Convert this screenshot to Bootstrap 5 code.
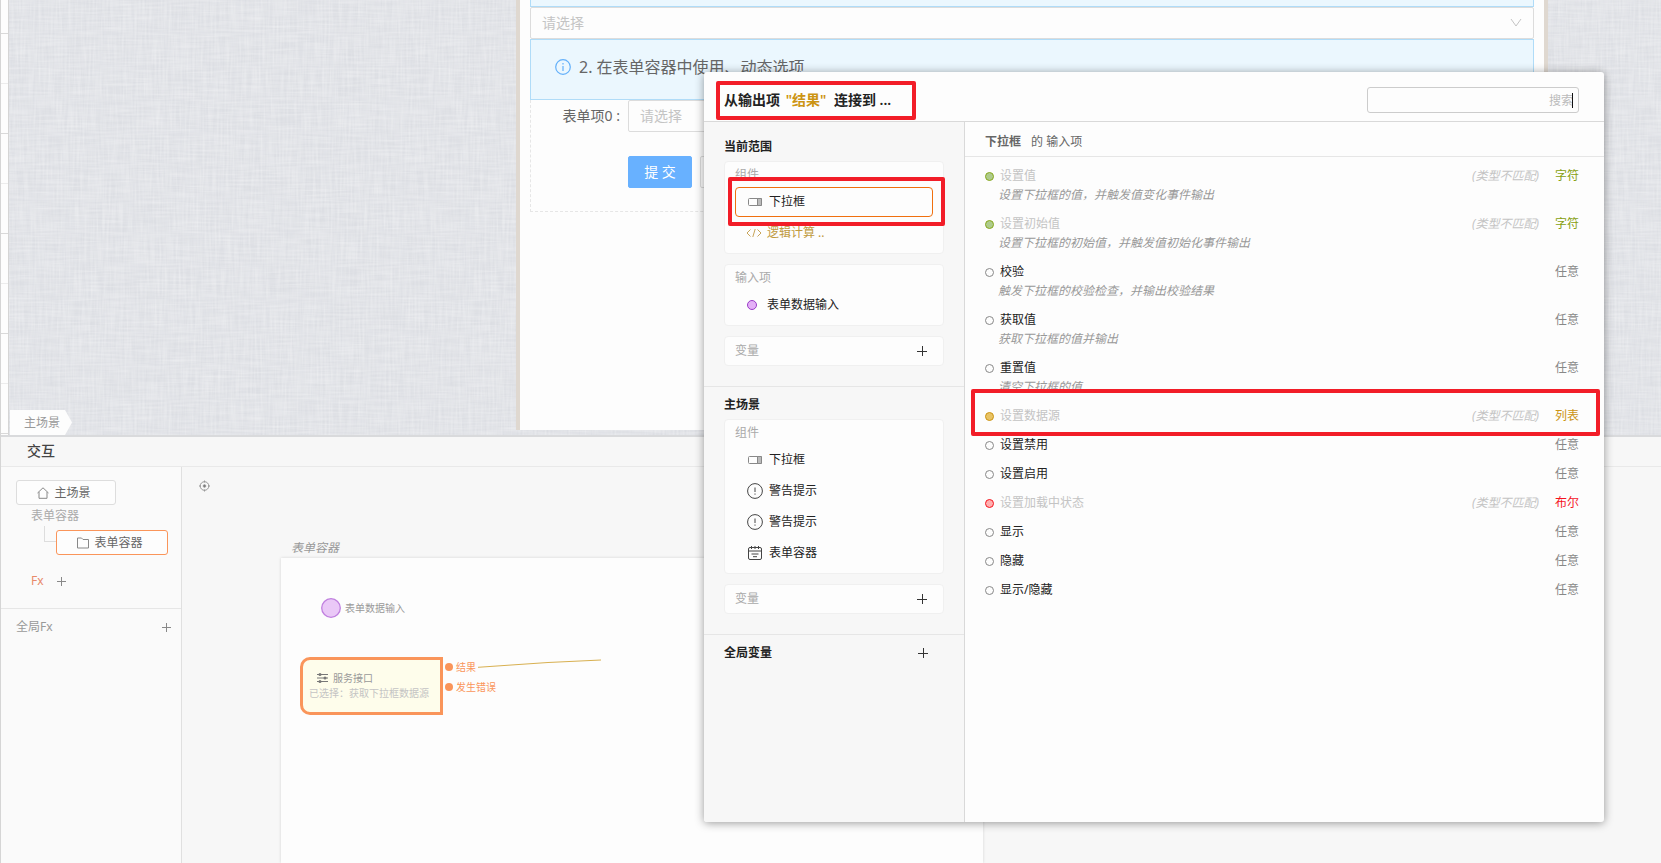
<!DOCTYPE html>
<html lang="zh-CN">
<head>
<meta charset="utf-8">
<meta name="viewport" content="width=device-width, initial-scale=1">
<title>交互</title>
<link href="https://cdn.jsdelivr.net/npm/bootstrap@5.3.0/dist/css/bootstrap.min.css" rel="stylesheet">
<style>
body{font-family:"Noto Sans","Noto Sans CJK SC",sans-serif;font-size:12px;line-height:20px;color:#222;background:#f7f7f7;overflow:hidden}
button,input{font-family:inherit}
.app{min-height:100vh;border-left:1px solid #d5d5d5}
svg{display:block;flex:none}
/* stage, with a linen weave made of horizontal and vertical streaks */
.stage{height:437px;border-bottom:2px solid #d9dadc;background-color:#dcdee3;overflow:hidden;
background-image:
url("data:image/svg+xml,%3Csvg xmlns='http://www.w3.org/2000/svg' width='400' height='400'%3E%3Cfilter id='a' x='0' y='0' width='1' height='1'%3E%3CfeTurbulence type='fractalNoise' baseFrequency='.03 .5' numOctaves='2' stitchTiles='stitch'/%3E%3CfeColorMatrix values='0 0 0 0 1 0 0 0 0 1 0 0 0 0 1 .5 0 0 0 -.15'/%3E%3C/filter%3E%3Crect width='400' height='400' filter='url(%23a)'/%3E%3C/svg%3E"),
url("data:image/svg+xml,%3Csvg xmlns='http://www.w3.org/2000/svg' width='400' height='400'%3E%3Cfilter id='a' x='0' y='0' width='1' height='1'%3E%3CfeTurbulence type='fractalNoise' baseFrequency='.5 .03' numOctaves='2' stitchTiles='stitch'/%3E%3CfeColorMatrix values='0 0 0 0 1 0 0 0 0 1 0 0 0 0 1 .5 0 0 0 -.15'/%3E%3C/filter%3E%3Crect width='400' height='400' filter='url(%23a)'/%3E%3C/svg%3E")}
.ruler{width:8px;border-right:1px solid #d5d5d5;background:linear-gradient(#d9d9d9 0 1px,#fdfdfd 1px 50px,#ececec 50px 51px,#fdfdfd 51px) 0 33px/100% 100px}
.crumb{height:25px;padding:0 12px 0 14px;background:#fdfdfd;color:#999;margin-left:1px;clip-path:polygon(0 0,calc(100% - 7px) 0,100% 50%,calc(100% - 7px) 100%,0 100%)}
.crumb a{color:inherit;text-decoration:none}
.artboard{height:430px;margin-left:444px;margin-right:113px;background:#fdfdfd;border:4px solid #dfd8d0;border-top:0;border-bottom:0;padding:0 10px}
.note{background:#ebf7fe;border:1px solid #b0dcf8;color:#666}
.note-top{height:7px;border-top:0}
.note-main{height:61px;font-size:16px;line-height:24px;padding-left:24px;gap:8px;padding-bottom:6px}
.pick{height:32px;border:1px solid #dcdcdc;background:#fdfdfd;color:#c4c4c4;font-size:14px;padding:0 11px;border-radius:2px;text-align:left}
.formbox{height:112px;border:1px dashed #e6e6e6;border-top:0;font-size:14px;color:#666}
.formbox label{width:97px;padding-right:8px;line-height:32px;text-align:right}
.formacts{padding:24px 0 0 97px}
.formbtn{height:32px;border-radius:2px;font-size:14px;border:1px solid #dcdcdc;background:#fdfdfd;width:64px;padding:0}
.formbtn.go{background:#68b1ff;border-color:#68b1ff;color:#fff}
/* interaction panel */
.phead{height:30px;border-bottom:1px solid #e9e9e9;font-size:14px;font-weight:500;line-height:28px;padding-left:26px;color:#444}
.tree{width:181px;background:#fafafa;border-right:1px solid #e0e0e0;color:#999;padding-top:13px}
.treebtn{width:100px;height:25px;border:1px solid #ddd;border-radius:3px;background:#fdfdfd;color:#666;padding:0 4px 0 0;gap:5px;font-size:12px;line-height:20px;margin-left:15px}
.treebtn.on{border-color:#fa955a;width:112px;margin:4px 0 0}
.treelabel{padding:1px 0 0 30px;color:#aaa;line-height:20px}
.elbow{width:12px;height:16px;border-left:1px solid #ddd;border-bottom:1px solid #ddd;margin-left:43px}
.fxrow{margin:16px 0 0 30px;height:20px;gap:13px}
.fxall{margin-top:17px;padding:8px 10px 0 15px;border-top:1px solid #e6e6e6}
.plus{border:0;background:none;padding:0;line-height:0;color:inherit}
.locate{margin:9px 0 0 17px}
.sheetname{margin:42px 0 0 109px;color:#999}
.sheet{margin-left:99px;width:702px;background:#fdfdfd;box-shadow:0 0 3px rgba(0,0,0,.14);flex:1;font-size:10px;line-height:16px}
.node{position:absolute}
.entry{left:40px;top:40px;gap:4px;color:#999}
.service{left:19px;top:99px;width:143px;height:58px;border:3px solid #fa955a;border-radius:10px 0 0 10px;background:#fefdeb;padding:10px 0 0 6px;color:#999}
.service .nfo{color:#c4c4c4;line-height:14px}
.port{left:164px;color:#fa955a;gap:3px}
.port i{width:8px;height:8px;border-radius:50%;background:#fa955a}
/* connect dialog */
.connect{position:absolute;left:703px;right:57px;top:72px;height:750px;background:#fdfdfd;border-radius:3px;box-shadow:0 1px 10px rgba(0,0,0,.4)}
.chead{height:50px;border-bottom:1px solid #d9d9d9;padding:7px 25px 0 20px}
.ctitle{font-size:14px;font-weight:600;line-height:20px;white-space:pre}
.gold{color:#cc9413;margin:0 4px 0 2px}
.search{width:212px;height:26px;border:1px solid #ccc;border-radius:3px;font-size:12px;text-align:right;padding:0 5px;background:#fdfdfd;display:block}
.search::placeholder{color:#bbb;opacity:1}
.caret{position:absolute;right:6px;top:6px;width:1px;height:15px;background:#111}
.scope{width:261px;background:#f7f7f7;border-right:1px solid #d9d9d9;padding-top:7px;border-bottom-left-radius:3px}
.sect{padding:4px 20px 10px;border-bottom:1px solid #e6e6e6}
.sect:last-child{border:0}
.sect h2{font-size:12px;font-weight:600;line-height:28px;margin:0}
.group{background:#fdfdfd;border:1px solid #f0f0f0;border-radius:4px;margin-bottom:10px;padding:0 10px 4px;color:#aaa}
.group.one{height:30px;padding-bottom:0}
.group p{margin:0;line-height:25px}
.pickitem{display:flex;align-items:center;width:100%;height:30px;margin-bottom:1px;border:1px solid transparent;border-radius:4px;background:none;padding:0 0 0 11px;color:#222;font-size:12px;gap:6px}
.pickitem svg{width:16px}
.pickitem.on{border-color:#f0700f}
.pickitem.logic{color:#c09a3e;gap:5px;padding-left:10px}
.dot{width:9px;height:9px;border:1px solid #888;border-radius:50%;flex:none}
.dot.g{background:#aecb8c;border-color:#87a81c}.dot.y{background:#e8c365;border-color:#cc9413}.dot.r{background:#ffb0b0;border-color:#f5141e}
.dot.p{width:10px;height:10px;background:#e4b0f7;border-color:#9a3cc8}
.inhead{height:35px;border-bottom:1px solid #e6e6e6;padding-left:20px;line-height:39px;color:#666}
.inhead b{margin-right:10px}
.inputs{padding:9px 25px 0 20px}
.inp{margin-bottom:9px}
.inp .nm{margin-left:6px}
.off .nm{color:#c4c4c4}
.inp em{color:#c4c4c4;margin-right:16px}
.inp .ty{color:#888}
.inp .ds{color:#999;font-style:italic;line-height:18px;margin:0 0 10px 13px}
.inp .s{color:#87a010}.inp .l{color:#cc9413}.inp .b{color:#f5141e}
.ring{position:absolute;border:4px solid #f21d28;border-radius:2px;pointer-events:none}
.ring.a{left:12px;top:9px;width:200px;height:39px}
.ring.b{left:-7px;right:-12px;top:-10px;height:49px}
.ring.c{left:-14px;right:-21px;top:-17px;height:47px}
</style>
</head>
<body>
<div class="app d-flex flex-column position-relative">
  <main class="stage d-flex">
    <div class="ruler"></div>
    <div class="d-flex align-items-end"><nav class="crumb d-flex align-items-center"><a href="#">主场景</a></nav></div>
    <section class="artboard flex-grow-1">
      <div class="note note-top"></div>
      <button class="pick w-100 d-flex align-items-center justify-content-between"><span>请选择</span>
        <svg width="12" height="12" viewBox="0 0 12 12" fill="none" stroke="#c4c4c4"><path d="M1 2l5 7 5-7"/></svg></button>
      <div class="note note-main d-flex align-items-center">
        <svg width="16" height="16" viewBox="0 0 16 16" fill="none" stroke="#63b0fa" stroke-width="1.2"><circle cx="8" cy="8" r="7.3"/><path d="M8 7v5M8 4v1.4"/></svg>
        <span>2. 在表单容器中使用、动态选项</span></div>
      <div class="formbox">
        <div class="d-flex"><label for="f0">表单项0 :</label><button id="f0" class="pick flex-grow-1">请选择</button></div>
        <div class="formacts d-flex gap-2"><button class="formbtn go">提 交</button><button class="formbtn" aria-label="重置"></button></div>
      </div>
    </section>
  </main>

  <section class="d-flex flex-column flex-grow-1">
    <div class="phead">交互</div>
    <div class="d-flex flex-grow-1">
      <aside class="tree">
        <button class="treebtn d-flex align-items-center justify-content-center">
          <svg width="12" height="12" viewBox="0 0 12 12" fill="none" stroke="#888"><path d="M.5 6L6 .8 11.500 6M2 5v6.300h8V5"/></svg>主场景</button>
        <div class="treelabel">表单容器</div>
        <div class="d-flex"><div class="elbow"></div><button class="treebtn on d-flex align-items-center justify-content-center">
          <svg width="12" height="12" viewBox="0 0 12 12" fill="none" stroke="#888"><path d="M.5 1h4l1.500 1.500h5.500v8.500H.5z"/></svg>表单容器</button></div>
        <div class="fxrow d-flex align-items-center"><span style="color:#e8896a">Fx</span>
          <button class="plus" aria-label="添加Fx"><svg width="9" height="9" viewBox="0 0 9 9" stroke="#888"><path d="M0 4.500h9M4.500 0v9"/></svg></button></div>
        <div class="fxall d-flex align-items-center justify-content-between"><span>全局Fx</span>
          <button class="plus" aria-label="添加全局Fx"><svg width="9" height="9" viewBox="0 0 9 9" stroke="#888"><path d="M0 4.500h9M4.500 0v9"/></svg></button></div>
      </aside>
      <div class="flex-grow-1 d-flex flex-column">
        <svg class="locate" width="11" height="20" viewBox="0 0 11 20" fill="none" stroke="#999"><circle cx="5.500" cy="10" r="4.300"/><path d="M5.500 4.500v2M5.500 13.500v2M0 10h2M9 10h2"/><circle cx="5.500" cy="10" r="1.300" fill="#777"/></svg>
        <em class="sheetname">表单容器</em>
        <div class="sheet position-relative">
          <div class="node entry d-flex align-items-center"><svg width="20" height="20"><circle cx="10" cy="10" r="9.300" fill="#eac8f7" stroke="#c080df" stroke-width="1.300"/></svg>表单数据输入</div>
          <div class="node service">
            <div class="d-flex align-items-center" style="gap:5px;padding-left:8px"><svg width="11" height="10" viewBox="0 0 11 10" stroke="#777" fill="#777"><path d="M0 1.500h11M0 5h11M0 8.500h11"/><g stroke="none"><circle cx="3" cy="1.500" r="1.500"/><circle cx="8" cy="5" r="1.500"/><circle cx="3" cy="8.500" r="1.500"/></g></svg>服务接口</div>
            <div class="nfo text-nowrap">已选择：获取下拉框数据源</div>
          </div>
          <div class="node port d-flex align-items-center" style="top:101px"><i></i>结果</div>
          <div class="node port d-flex align-items-center" style="top:121px"><i></i>发生错误</div>
          <svg class="node" style="left:197px;top:101px" width="124" height="9" viewBox="0 0 124 9" fill="none" stroke="#d8b050"><path d="M0 8.300L70 3.500 123 1"/></svg>
        </div>
      </div>
    </div>
  </section>

  <div class="connect d-flex flex-column" role="dialog" aria-label="连接">
    <header class="chead d-flex align-items-center justify-content-between">
      <div class="ctitle">从输出项 <span class="gold">"结果"</span> 连接到 ...</div>
      <div class="position-relative"><input class="search" type="text" placeholder="搜索" aria-label="搜索"><span class="caret"></span></div>
      <span class="ring a"></span>
    </header>
    <div class="d-flex flex-grow-1">
      <aside class="scope">
        <section class="sect"><h2>当前范围</h2>
          <div class="group"><p>组件</p>
            <div class="position-relative"><button class="pickitem on"><svg height="10" viewBox="0 0 16 10" fill="none" stroke="#888"><rect x="1.500" y="1.500" width="13" height="7" rx="1"/><path d="M10.500 1.500h4v7h-4z" fill="#bbb"/></svg>下拉框</button><span class="ring b"></span></div>
            <button class="pickitem logic"><svg height="10" viewBox="0 0 16 10" fill="none" stroke="#c8a55a"><path d="M4.500 1.500L1 5l3.500 3.500M11.500 1.500L15 5l-3.500 3.500M9.200 1L6.800 9"/></svg>逻辑计算 ..</button>
          </div>
          <div class="group"><p>输入项</p><button class="pickitem"><i class="dot p"></i><span class="ms-1">表单数据输入</span></button></div>
          <div class="group one d-flex align-items-center justify-content-between pe-3">变量<button class="plus" aria-label="添加变量"><svg width="10" height="10" viewBox="0 0 10 10" stroke="#333"><path d="M0 5.500h10M5.500 0v10"/></svg></button></div>
        </section>
        <section class="sect"><h2>主场景</h2>
          <div class="group"><p>组件</p>
            <button class="pickitem"><svg height="10" viewBox="0 0 16 10" fill="none" stroke="#888"><rect x="1.500" y="1.500" width="13" height="7" rx="1"/><path d="M10.500 1.500h4v7h-4z" fill="#bbb"/></svg>下拉框</button>
            <button class="pickitem"><svg height="16" viewBox="0 0 16 16" fill="none" stroke="#444"><circle cx="8" cy="8" r="7.400"/><path d="M8 4.500V9M8 10.500v1.200"/></svg>警告提示</button>
            <button class="pickitem"><svg height="16" viewBox="0 0 16 16" fill="none" stroke="#444"><circle cx="8" cy="8" r="7.400"/><path d="M8 4.500V9M8 10.500v1.200"/></svg>警告提示</button>
            <button class="pickitem"><svg height="16" viewBox="0 0 16 16" fill="none" stroke="#444"><rect x="1.500" y="2.500" width="13" height="12" rx="1.500"/><path d="M1.500 6h13M4.500 1v3M8 1v3M11.500 1v3M4.500 9h7M6 11.700h4"/></svg>表单容器</button>
          </div>
          <div class="group one d-flex align-items-center justify-content-between pe-3">变量<button class="plus" aria-label="添加变量"><svg width="10" height="10" viewBox="0 0 10 10" stroke="#333"><path d="M0 5.500h10M5.500 0v10"/></svg></button></div>
        </section>
        <section class="sect d-flex align-items-center justify-content-between"><h2>全局变量</h2><button class="plus me-3" aria-label="添加全局变量"><svg width="10" height="10" viewBox="0 0 10 10" stroke="#333"><path d="M0 5.500h10M5.500 0v10"/></svg></button></section>
      </aside>
      <section class="flex-grow-1">
        <div class="inhead"><b>下拉框</b>的 输入项</div>
        <div class="inputs">
          <div class="inp off"><div class="d-flex align-items-center"><i class="dot g"></i><span class="nm me-auto">设置值</span><em>(类型不匹配)</em><span class="ty s">字符</span></div><p class="ds">设置下拉框的值，并触发值变化事件输出</p></div>
          <div class="inp off"><div class="d-flex align-items-center"><i class="dot g"></i><span class="nm me-auto">设置初始值</span><em>(类型不匹配)</em><span class="ty s">字符</span></div><p class="ds">设置下拉框的初始值，并触发值初始化事件输出</p></div>
          <div class="inp"><div class="d-flex align-items-center"><i class="dot"></i><span class="nm me-auto">校验</span><span class="ty">任意</span></div><p class="ds">触发下拉框的校验检查，并输出校验结果</p></div>
          <div class="inp"><div class="d-flex align-items-center"><i class="dot"></i><span class="nm me-auto">获取值</span><span class="ty">任意</span></div><p class="ds">获取下拉框的值并输出</p></div>
          <div class="inp"><div class="d-flex align-items-center"><i class="dot"></i><span class="nm me-auto">重置值</span><span class="ty">任意</span></div><p class="ds">清空下拉框的值</p></div>
          <div class="inp off position-relative"><div class="d-flex align-items-center"><i class="dot y"></i><span class="nm me-auto">设置数据源</span><em>(类型不匹配)</em><span class="ty l">列表</span></div><span class="ring c"></span></div>
          <div class="inp d-flex align-items-center"><i class="dot"></i><span class="nm me-auto">设置禁用</span><span class="ty">任意</span></div>
          <div class="inp d-flex align-items-center"><i class="dot"></i><span class="nm me-auto">设置启用</span><span class="ty">任意</span></div>
          <div class="inp off d-flex align-items-center"><i class="dot r"></i><span class="nm me-auto">设置加载中状态</span><em>(类型不匹配)</em><span class="ty b">布尔</span></div>
          <div class="inp d-flex align-items-center"><i class="dot"></i><span class="nm me-auto">显示</span><span class="ty">任意</span></div>
          <div class="inp d-flex align-items-center"><i class="dot"></i><span class="nm me-auto">隐藏</span><span class="ty">任意</span></div>
          <div class="inp d-flex align-items-center"><i class="dot"></i><span class="nm me-auto">显示/隐藏</span><span class="ty">任意</span></div>
        </div>
      </section>
    </div>
  </div>
</div>
<script src="https://cdn.jsdelivr.net/npm/bootstrap@5.3.0/dist/js/bootstrap.bundle.min.js"></script>
</body>
</html>
